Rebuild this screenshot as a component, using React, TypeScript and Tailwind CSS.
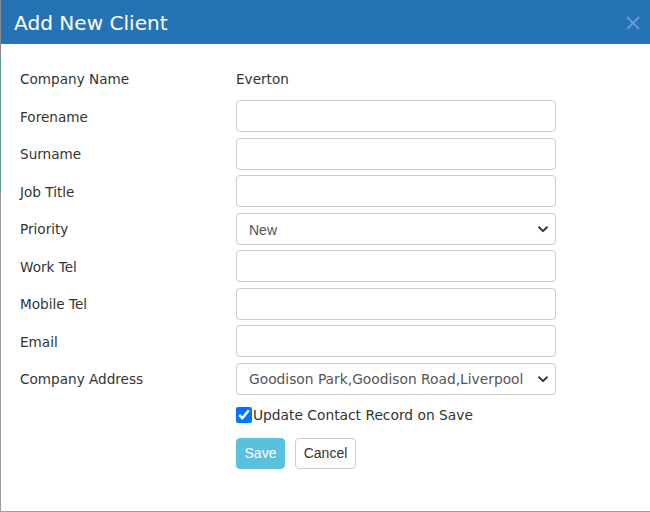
import { useState } from "react";

const fields = [
  { label: "Forename", type: "text" },
  { label: "Surname", type: "text" },
  { label: "Job Title", type: "text" },
  { label: "Priority", type: "select", options: ["New", "Low", "Medium", "High"] },
  { label: "Work Tel", type: "text" },
  { label: "Mobile Tel", type: "text" },
  { label: "Email", type: "text" },
  {
    label: "Company Address",
    type: "select",
    options: ["Goodison Park,Goodison Road,Liverpool"],
  },
];

function Chevron() {
  return (
    <svg
      className="pointer-events-none absolute right-[6px] top-1/2 -translate-y-1/2"
      width="14"
      height="14"
      viewBox="0 0 16 16"
      fill="none"
      stroke="#333"
      strokeWidth="2.2"
      strokeLinecap="round"
      strokeLinejoin="round"
    >
      <path d="M3.5 6l4.5 4.5L12.5 6" />
    </svg>
  );
}

export default function App() {
  const [updateContact, setUpdateContact] = useState(true);

  return (
    <div className="w-[650px] h-[512px] bg-white flex flex-col font-['DejaVu_Sans',sans-serif]">
      <div className="h-[44px] shrink-0 bg-[#2573b5] flex items-center justify-between pl-[13px] pr-[8px] border-l border-[#8a8a8a]">
        <h2 className="text-white text-[20.1px] translate-y-[1px]">Add New Client</h2>
        <button className="w-[18px] h-[18px] flex items-center justify-center translate-y-[1px]">
          <svg width="14" height="14" viewBox="0 0 14 14" stroke="#6d94dc" strokeWidth="1.8">
            <path d="M1 1l12 12M13 1L1 13" />
          </svg>
        </button>
      </div>

      <div className="flex-1 flex">
        <div className="w-px flex flex-col">
          <div className="h-[11px] bg-[#8a8a8a]" />
          <div className="h-[138px] bg-[#5b9a8a]" />
          <div className="flex-1 bg-[#9e9e9e]" />
        </div>
        <div className="flex-1 border-b border-[#9e9e9e] pt-[18.5px] pl-[19px]">
          <div className="flex flex-col gap-[5.5px]">
            <div className="flex items-center h-[32px]">
              <label className="w-[216px] text-[13.6px] text-[#333] translate-y-[1px]">Company Name</label>
              <span className="text-[13.6px] text-[#333] translate-y-[1px]">Everton</span>
            </div>
            {fields.map((f) => (
              <div key={f.label} className="flex items-center h-[32px]">
                <label className="w-[216px] text-[13.6px] text-[#333] translate-y-[1px]">{f.label}</label>
                {f.type === "select" ? (
                  <div className="relative w-[320px] h-[32px]">
                    <select
                      className={`appearance-none w-full h-full rounded-[4px] border border-[#ccc] bg-white pr-[28px] text-[#555] outline-none ${
                        f.label === "Priority"
                          ? "pl-[12px] pt-[3px] font-['Liberation_Sans',Arial,sans-serif] text-[14px]"
                          : "pl-[12px] pt-[2px] font-['DejaVu_Sans',sans-serif] text-[13.8px]"
                      }`}
                      defaultValue={f.options![0]}
                    >
                      {f.options!.map((o) => (
                        <option key={o}>{o}</option>
                      ))}
                    </select>
                    <Chevron />
                  </div>
                ) : (
                  <input
                    type="text"
                    className="w-[320px] h-[32px] rounded-[4px] border border-[#ccc] bg-white px-[12px] text-[14px] text-[#555] outline-none"
                  />
                )}
              </div>
            ))}
          </div>

          <div className="ml-[216px] mt-[10px] flex items-center h-[20px]">
            <input
              type="checkbox"
              checked={updateContact}
              onChange={(e) => setUpdateContact(e.target.checked)}
              className="m-0 w-[16px] h-[16px]"
            />
            <span className="text-[13.8px] text-[#333] ml-px translate-y-[1px]">Update Contact Record on Save</span>
          </div>

          <div className="ml-[216px] mt-[13px] flex gap-[10px] font-['Liberation_Sans',Arial,sans-serif] text-[14px]">
            <button className="h-[31px] w-[49px] pt-px rounded-[4px] bg-[#5bc0de] border border-[#5bc0de] text-white">
              Save
            </button>
            <button className="h-[31px] w-[61px] pt-px rounded-[4px] bg-white border border-[#ccc] text-[#333]">
              Cancel
            </button>
          </div>
        </div>
      </div>
    </div>
  );
}
